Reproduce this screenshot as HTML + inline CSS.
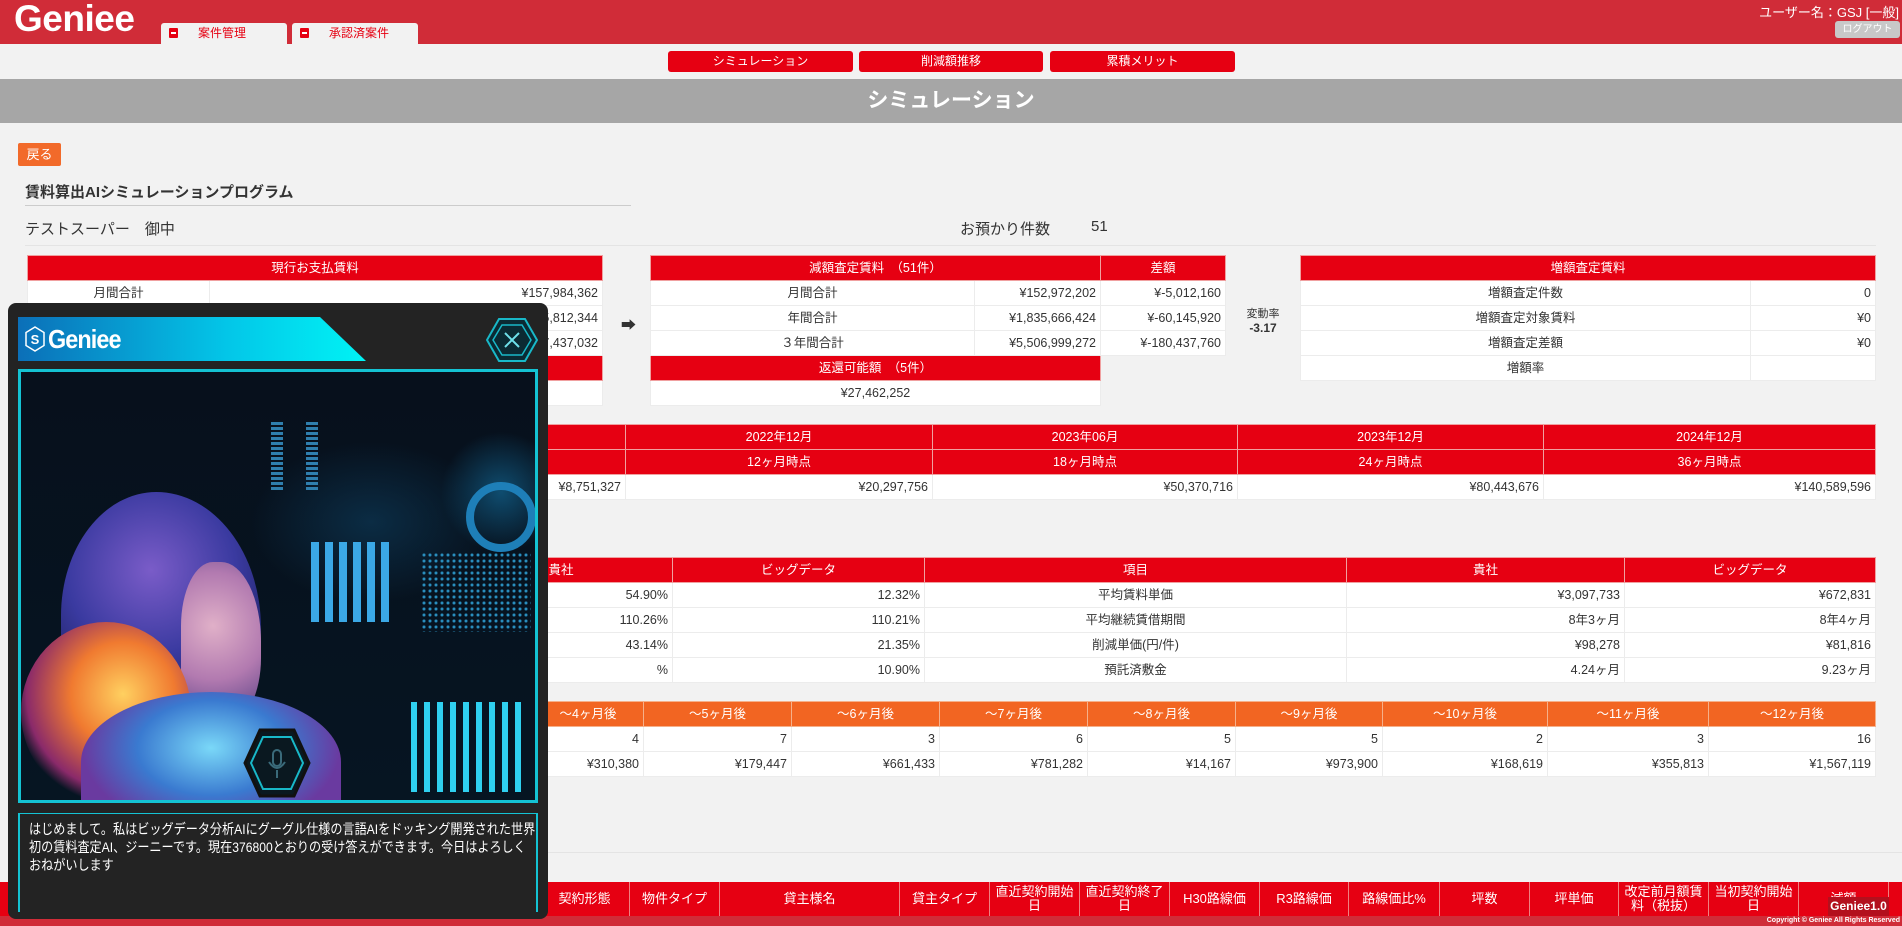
<!DOCTYPE html>
<html><head><meta charset="utf-8">
<style>
*{box-sizing:border-box;margin:0;padding:0}
body{width:1902px;height:926px;overflow:hidden;background:#f2f2f2;font-family:"Liberation Sans","Noto Sans CJK JP",sans-serif;color:#333;position:relative;font-size:13px}
.abs{position:absolute}
#hdr{left:0;top:0;width:1902px;height:44px;background:#d02c38}
.logo{left:14px;top:-2px;color:#fff;font-size:37px;font-weight:bold;letter-spacing:-0.5px}
.tab{top:23px;height:21px;width:126px;background:#f2f2f2;border-radius:3px 3px 0 0;color:#e60012;font-size:12px;line-height:21px;padding-left:37px}
.tab i{position:absolute;left:8px;top:5px;width:9px;height:10px;background:#e60012;border-radius:1px}
.tab i:after{content:"";position:absolute;left:2px;top:4px;width:5px;height:2px;background:#fff}
.nav{top:51px;height:21px;background:#e60012;color:#fff;font-size:12px;text-align:center;line-height:21px;border-radius:3px}
#ttl{left:0;top:79px;width:1902px;height:44px;background:#a6a6a6;color:#fff;font-size:21px;font-weight:bold;text-align:center;line-height:44px}
table{border-collapse:collapse;position:absolute;table-layout:fixed;background:#fff}
td,th{height:25px;font-size:12.5px;padding:0 4px;border:1px solid #ececec;white-space:nowrap;overflow:hidden;vertical-align:middle;line-height:16px}
th{background:#e60012;color:#fff;font-weight:normal;border-color:#f0a0a0 ;text-align:center}
td.c{text-align:center}td.r{text-align:right}
.or th{background:#f26522;border-color:#f5b08a}
</style></head><body>
<div id="hdr" class="abs"></div>
<div class="abs logo">Geniee</div>
<div class="abs tab" style="left:161px"><i></i>案件管理</div>
<div class="abs tab" style="left:292px"><i></i>承認済案件</div>
<div class="abs" style="right:3px;top:2px;color:#fff;font-size:13px">ユーザー名：GSJ [一般]</div>
<div class="abs" style="left:1835px;top:21px;width:65px;height:17px;background:#c8c8c8;border-radius:3px;color:#fff;font-size:10px;text-align:center;line-height:17px">ログアウト</div>
<div class="abs nav" style="left:668px;width:185px">シミュレーション</div>
<div class="abs nav" style="left:859px;width:184px">削減額推移</div>
<div class="abs nav" style="left:1050px;width:185px">累積メリット</div>
<div id="ttl" class="abs">シミュレーション</div>
<div class="abs" style="left:18px;top:143px;width:43px;height:23px;background:#f26a2a;color:#fff;border-radius:2px;font-size:13px;text-align:center;line-height:23px">戻る</div>
<div class="abs" style="left:25px;top:181px;font-size:15px;font-weight:bold;color:#333">賃料算出AIシミュレーションプログラム</div>
<div class="abs" style="left:25px;top:205px;width:606px;height:1px;background:#ccc"></div>
<div class="abs" style="left:25px;top:218px;font-size:15px">テストスーパー　御中</div>
<div class="abs" style="left:960px;top:218px;font-size:15px">お預かり件数</div>
<div class="abs" style="left:1091px;top:218px;font-size:15px">51</div>
<div class="abs" style="left:25px;top:245px;width:1851px;height:1px;background:#e4e4e4"></div>

<table style="left:27px;top:255px;width:576px">
<col style="width:182px"><col>
<tr><th colspan="2">現行お支払賃料</th></tr>
<tr><td class="c">月間合計</td><td class="r">¥157,984,362</td></tr>
<tr><td class="c">年間合計</td><td class="r">¥1,895,812,344</td></tr>
<tr><td class="c">３年間合計</td><td class="r">¥5,687,437,032</td></tr>
<tr><th colspan="2">&nbsp;</th></tr>
<tr><td></td><td></td></tr>
</table>
<div class="abs" style="left:621px;top:314px;font-size:15px;color:#333">➡</div>
<table style="left:650px;top:255px;width:576px">
<col style="width:324px"><col style="width:126px"><col>
<tr><th colspan="2">減額査定賃料　（51件）</th><th>差額</th></tr>
<tr><td class="c">月間合計</td><td class="r">¥152,972,202</td><td class="r">¥-5,012,160</td></tr>
<tr><td class="c">年間合計</td><td class="r">¥1,835,666,424</td><td class="r">¥-60,145,920</td></tr>
<tr><td class="c">３年間合計</td><td class="r">¥5,506,999,272</td><td class="r">¥-180,437,760</td></tr>
<tr><th colspan="2">返還可能額　（5件）</th><td style="border:none;background:#f2f2f2"></td></tr>
<tr><td colspan="2" class="c">¥27,462,252</td><td style="border:none;background:#f2f2f2"></td></tr>
</table>
<div class="abs" style="left:1238px;top:305px;font-size:11px;text-align:center;width:50px;white-space:nowrap">変動率<br><b style="font-size:12px">-3.17</b></div>
<table style="left:1300px;top:255px;width:576px">
<col style="width:450px"><col>
<tr><th colspan="2">増額査定賃料</th></tr>
<tr><td class="c">増額査定件数</td><td class="r">0</td></tr>
<tr><td class="c">増額査定対象賃料</td><td class="r">¥0</td></tr>
<tr><td class="c">増額査定差額</td><td class="r">¥0</td></tr>
<tr><td class="c">増額率</td><td></td></tr>
</table>

<table style="left:27px;top:424px;width:1849px">
<col style="width:300px"><col style="width:298px"><col style="width:307px"><col style="width:305px"><col style="width:306px"><col>
<tr><th rowspan="2">経過</th><th>2022年06月</th><th>2022年12月</th><th>2023年06月</th><th>2023年12月</th><th>2024年12月</th></tr>
<tr><th>6ヶ月時点</th><th>12ヶ月時点</th><th>18ヶ月時点</th><th>24ヶ月時点</th><th>36ヶ月時点</th></tr>
<tr><td class="c">削減額累計</td><td class="r">¥8,751,327</td><td class="r">¥20,297,756</td><td class="r">¥50,370,716</td><td class="r">¥80,443,676</td><td class="r">¥140,589,596</td></tr>
</table>
<div class="abs" style="left:25px;top:557px;width:606px;height:1px;background:#ccc"></div>

<table style="left:27px;top:557px;width:1849px">
<col style="width:422px"><col style="width:223px"><col style="width:252px"><col style="width:422px"><col style="width:278px"><col>
<tr><th>項目</th><th>貴社</th><th>ビッグデータ</th><th>項目</th><th>貴社</th><th>ビッグデータ</th></tr>
<tr><td class="c">削減率</td><td class="r">54.90%</td><td class="r">12.32%</td><td class="c">平均賃料単価</td><td class="r">¥3,097,733</td><td class="r">¥672,831</td></tr>
<tr><td class="c">賃料比</td><td class="r">110.26%</td><td class="r">110.21%</td><td class="c">平均継続賃借期間</td><td class="r">8年3ヶ月</td><td class="r">8年4ヶ月</td></tr>
<tr><td class="c">減額率</td><td class="r">43.14%</td><td class="r">21.35%</td><td class="c">削減単価(円/件)</td><td class="r">¥98,278</td><td class="r">¥81,816</td></tr>
<tr><td class="c">増額率</td><td class="r">%</td><td class="r">10.90%</td><td class="c">預託済敷金</td><td class="r">4.24ヶ月</td><td class="r">9.23ヶ月</td></tr>
</table>

<table class="or" style="left:27px;top:701px;width:1849px">
<col style="width:172px"><col style="width:111px"><col style="width:111px"><col style="width:111px"><col style="width:111px"><col style="width:148px"><col style="width:148px"><col style="width:148px"><col style="width:148px"><col style="width:147px"><col style="width:165px"><col style="width:161px"><col>
<tr><th>期間</th><th>～1ヶ月後</th><th>～2ヶ月後</th><th>～3ヶ月後</th><th>～4ヶ月後</th><th>～5ヶ月後</th><th>～6ヶ月後</th><th>～7ヶ月後</th><th>～8ヶ月後</th><th>～9ヶ月後</th><th>～10ヶ月後</th><th>～11ヶ月後</th><th>～12ヶ月後</th></tr>
<tr><td class="c">件数</td><td class="r">3</td><td class="r">5</td><td class="r">2</td><td class="r">4</td><td class="r">7</td><td class="r">3</td><td class="r">6</td><td class="r">5</td><td class="r">5</td><td class="r">2</td><td class="r">3</td><td class="r">16</td></tr>
<tr><td class="c">金額</td><td class="r">¥100,000</td><td class="r">¥200,000</td><td class="r">¥150,000</td><td class="r">¥310,380</td><td class="r">¥179,447</td><td class="r">¥661,433</td><td class="r">¥781,282</td><td class="r">¥14,167</td><td class="r">¥973,900</td><td class="r">¥168,619</td><td class="r">¥355,813</td><td class="r">¥1,567,119</td></tr>
</table>
<div class="abs" style="left:25px;top:852px;width:1877px;height:1px;background:#e4e4e4"></div>

<div class="abs" style="left:0;top:882px;width:1902px;height:34px;background:#e60012;overflow:hidden;display:flex;color:#fff;font-size:13px;line-height:14px;text-align:center">
<div style="width:539px;flex:none"></div>
<div style="width:90px;flex:none;border-left:1px solid #f08080;padding-top:10px">契約形態</div>
<div style="width:90px;flex:none;border-left:1px solid #f08080;padding-top:10px">物件タイプ</div>
<div style="width:180px;flex:none;border-left:1px solid #f08080;padding-top:10px">貸主様名</div>
<div style="width:90px;flex:none;border-left:1px solid #f08080;padding-top:10px">貸主タイプ</div>
<div style="width:90px;flex:none;border-left:1px solid #f08080;padding-top:3px">直近契約開始<br>日</div>
<div style="width:90px;flex:none;border-left:1px solid #f08080;padding-top:3px">直近契約終了<br>日</div>
<div style="width:90px;flex:none;border-left:1px solid #f08080;padding-top:10px">H30路線価</div>
<div style="width:89px;flex:none;border-left:1px solid #f08080;padding-top:10px">R3路線価</div>
<div style="width:91px;flex:none;border-left:1px solid #f08080;padding-top:10px">路線価比%</div>
<div style="width:90px;flex:none;border-left:1px solid #f08080;padding-top:10px">坪数</div>
<div style="width:89px;flex:none;border-left:1px solid #f08080;padding-top:10px">坪単価</div>
<div style="width:90px;flex:none;border-left:1px solid #f08080;padding-top:3px">改定前月額賃<br>料（税抜）</div>
<div style="width:90px;flex:none;border-left:1px solid #f08080;padding-top:3px">当初契約開始<br>日</div>
<div style="width:90px;flex:none;border-left:1px solid #f08080;padding-top:10px">減額</div>
<div style="width:60px;flex:none;border-left:1px solid #f08080;padding-top:10px">房</div>
</div>
<div class="abs" style="left:0;top:916px;width:1902px;height:10px;background:#d02c38"></div>
<div class="abs" style="right:2px;top:916px;color:#fff;font-size:7px;font-weight:bold;line-height:10px">Copyright © Geniee All Rights Reserved</div>
<div class="abs" style="left:1828px;top:897px;width:61px;height:19px;background:#b3101d;color:#fff;font-size:12px;font-weight:bold;text-align:center;line-height:19px">Geniee1.0</div>

<!-- overlay -->
<div class="abs" style="left:8px;top:303px;width:540px;height:616px;background:#232323;border-radius:8px"></div>
<div class="abs" style="left:18px;top:317px;width:348px;height:44px;background:linear-gradient(90deg,#0b6fb8,#03c6e8 60%,#00f3f5);clip-path:polygon(0 0,302px 0,348px 100%,0 100%)"></div>
<svg class="abs" style="left:25px;top:326px" width="20" height="26" viewBox="0 0 20 26"><polygon points="10,1 19,6.5 19,19.5 10,25 1,19.5 1,6.5" fill="none" stroke="#fff" stroke-width="1.5"/><text x="10" y="18" fill="#fff" font-size="13" font-weight="bold" text-anchor="middle" font-family="Liberation Sans">S</text></svg>
<div class="abs" style="left:48px;top:324px;color:#fff;font-size:26px;font-weight:bold;letter-spacing:-1px;transform:scaleX(0.9);transform-origin:left">Geniee</div>
<svg class="abs" style="left:486px;top:317px" width="52" height="46" viewBox="0 0 52 46"><polygon points="13,2 39,2 51,23 39,44 13,44 1,23" fill="#0b2a33" stroke="#19b8c8" stroke-width="2"/><polygon points="16,8 36,8 45,23 36,38 16,38 7,23" fill="none" stroke="#19b8c8" stroke-width="1.5"/><path d="M19 16 L33 30 M33 16 L19 30" stroke="#6fe0ea" stroke-width="2"/></svg>
<div class="abs" style="left:18px;top:369px;width:520px;height:434px;border:3px solid #14c3d3;background:#050b14;overflow:hidden">
 <div class="abs" style="left:0;top:0;width:514px;height:428px;background:radial-gradient(circle at 480px 120px,#0f4d70 0,transparent 60px),radial-gradient(ellipse 120px 80px at 350px 150px,#0b2c44,transparent),linear-gradient(#07101c,#061522)"></div>
 <div class="abs" style="left:250px;top:50px;width:12px;height:70px;background:repeating-linear-gradient(#2f7fae 0 3px,transparent 3px 5px)"></div>
 <div class="abs" style="left:285px;top:50px;width:12px;height:70px;background:repeating-linear-gradient(#2f7fae 0 3px,transparent 3px 5px)"></div>
 <div class="abs" style="left:290px;top:170px;width:80px;height:80px;background:repeating-linear-gradient(90deg,#3ba8e6 0 8px,transparent 8px 14px)"></div>
 <div class="abs" style="left:445px;top:110px;width:70px;height:70px;border:8px solid #1e7fb8;border-radius:50%"></div>
 <div class="abs" style="left:400px;top:180px;width:110px;height:80px;background:radial-gradient(#2a90c0 1px,transparent 2px) 0 0/6px 6px"></div>
 <div class="abs" style="left:390px;top:330px;width:110px;height:90px;background:repeating-linear-gradient(90deg,#2fd0f0 0 6px,transparent 6px 13px)"></div>
 <div class="abs" style="left:40px;top:120px;width:200px;height:260px;border-radius:50% 55% 40% 45%;background:radial-gradient(circle at 45% 30%,#7a5cc8,#3a3aa0 40%,#1b1f5a 70%)"></div>
 <div class="abs" style="left:160px;top:190px;width:80px;height:160px;border-radius:40% 50% 40% 30%;background:radial-gradient(circle at 40% 40%,#e0b0c8,#b27ab0 50%,#4e3a80)"></div>
 <div class="abs" style="left:0;top:250px;width:170px;height:180px;border-radius:50%;background:radial-gradient(circle at 60% 40%,#ffd060,#f07a30 35%,#8a2a6a 65%,transparent 75%)"></div>
 <div class="abs" style="left:60px;top:320px;width:260px;height:140px;border-radius:50% 50% 0 0;background:radial-gradient(ellipse at 50% 40%,#7ad8f8,#3a7ad0 40%,#6a3aa0 70%)"></div>
 <svg class="abs" style="left:222px;top:356px" width="68" height="70" viewBox="0 0 68 70"><polygon points="17,2 51,2 66,35 51,68 17,68 2,35" fill="#0a1820" stroke="#111" stroke-width="3"/><polygon points="20,9 48,9 60,35 48,61 20,61 8,35" fill="none" stroke="#19b8c8" stroke-width="2"/><rect x="30" y="22" width="8" height="16" rx="4" fill="none" stroke="#3a6a7a" stroke-width="2"/><path d="M26 34 Q34 46 42 34 M34 42 V50" fill="none" stroke="#3a6a7a" stroke-width="2"/></svg>
</div>
<div class="abs" style="left:18px;top:813px;width:520px;height:99px;border-left:2px solid #14c3d3;border-right:2px solid #14c3d3;border-top:1px solid #14c3d3;overflow:hidden"></div>
<div class="abs" style="left:29px;top:820px;width:645px;color:#fff;font-size:14px;line-height:18px;white-space:nowrap;transform:scaleX(0.865);transform-origin:left top">はじめまして。私はビッグデータ分析AIにグーグル仕様の言語AIをドッキング開発された世界<br>初の賃料査定AI、ジーニーです。現在376800とおりの受け答えができます。今日はよろしく<br>おねがいします</div>
</body></html>
